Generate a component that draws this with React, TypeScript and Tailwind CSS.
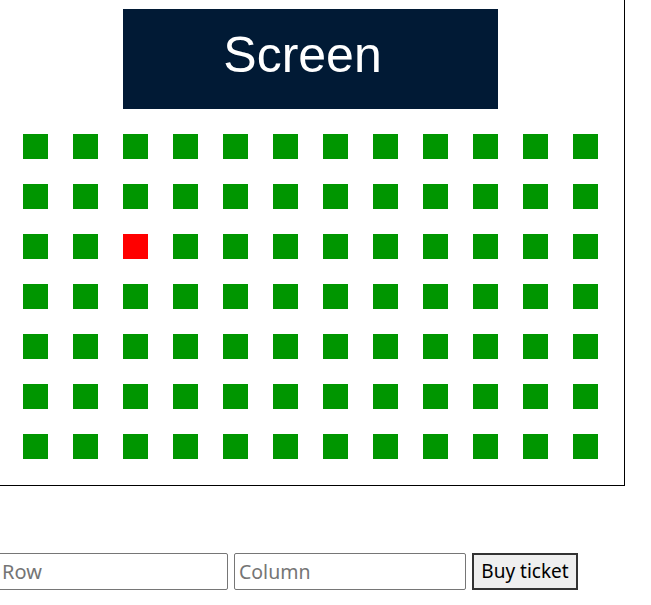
import React from "react";

export default function App() {
  const rows = 7;
  const cols = 12;
  const taken = new Set(["2-2"]);
  return (
    <div className="w-[651px] h-[605px] overflow-hidden bg-white" style={{ fontFamily: '"Noto Sans", "Open Sans", sans-serif' }}>
      <div className="-ml-[3px] -mt-[1px]">
        <div className="w-[628px] h-[487px] border border-black box-border flex flex-col">
          <div className="ml-[125px] mt-[9px] w-[375px] h-[100px] bg-[#011a35] flex items-center justify-center">
            <span className="text-white text-[50px] leading-none -mt-[8px] -ml-[16px]" style={{ fontFamily: '"Liberation Sans", Arial, sans-serif' }}>Screen</span>
          </div>
          <div className="ml-[25px] mt-[25px] flex flex-col gap-[25px]">
            {Array.from({ length: rows }).map((_, r) => (
              <div key={r} className="flex gap-[25px]">
                {Array.from({ length: cols }).map((_, c) => (
                  <div key={c} className={`w-[25px] h-[25px] ${taken.has(`${r}-${c}`) ? "bg-[#ff0000]" : "bg-[#009600]"}`} />
                ))}
              </div>
            ))}
          </div>
        </div>
        <div className="mt-[67px] flex gap-[6px] items-center">
          <input placeholder="Row" className="w-[231px] h-[37px] border border-[#767676] rounded-[2px] px-[4px] text-[20px] text-black placeholder:text-[#757575] outline-none" />
          <input placeholder="Column" className="w-[232px] h-[37px] border border-[#767676] rounded-[2px] px-[4px] text-[19.5px] text-black placeholder:text-[#757575] outline-none" />
          <button className="w-[106px] h-[37px] bg-[#efefef] border-2 border-[#333333] text-[19px] text-black leading-none flex items-center justify-center">Buy ticket</button>
        </div>
      </div>
    </div>
  );
}
